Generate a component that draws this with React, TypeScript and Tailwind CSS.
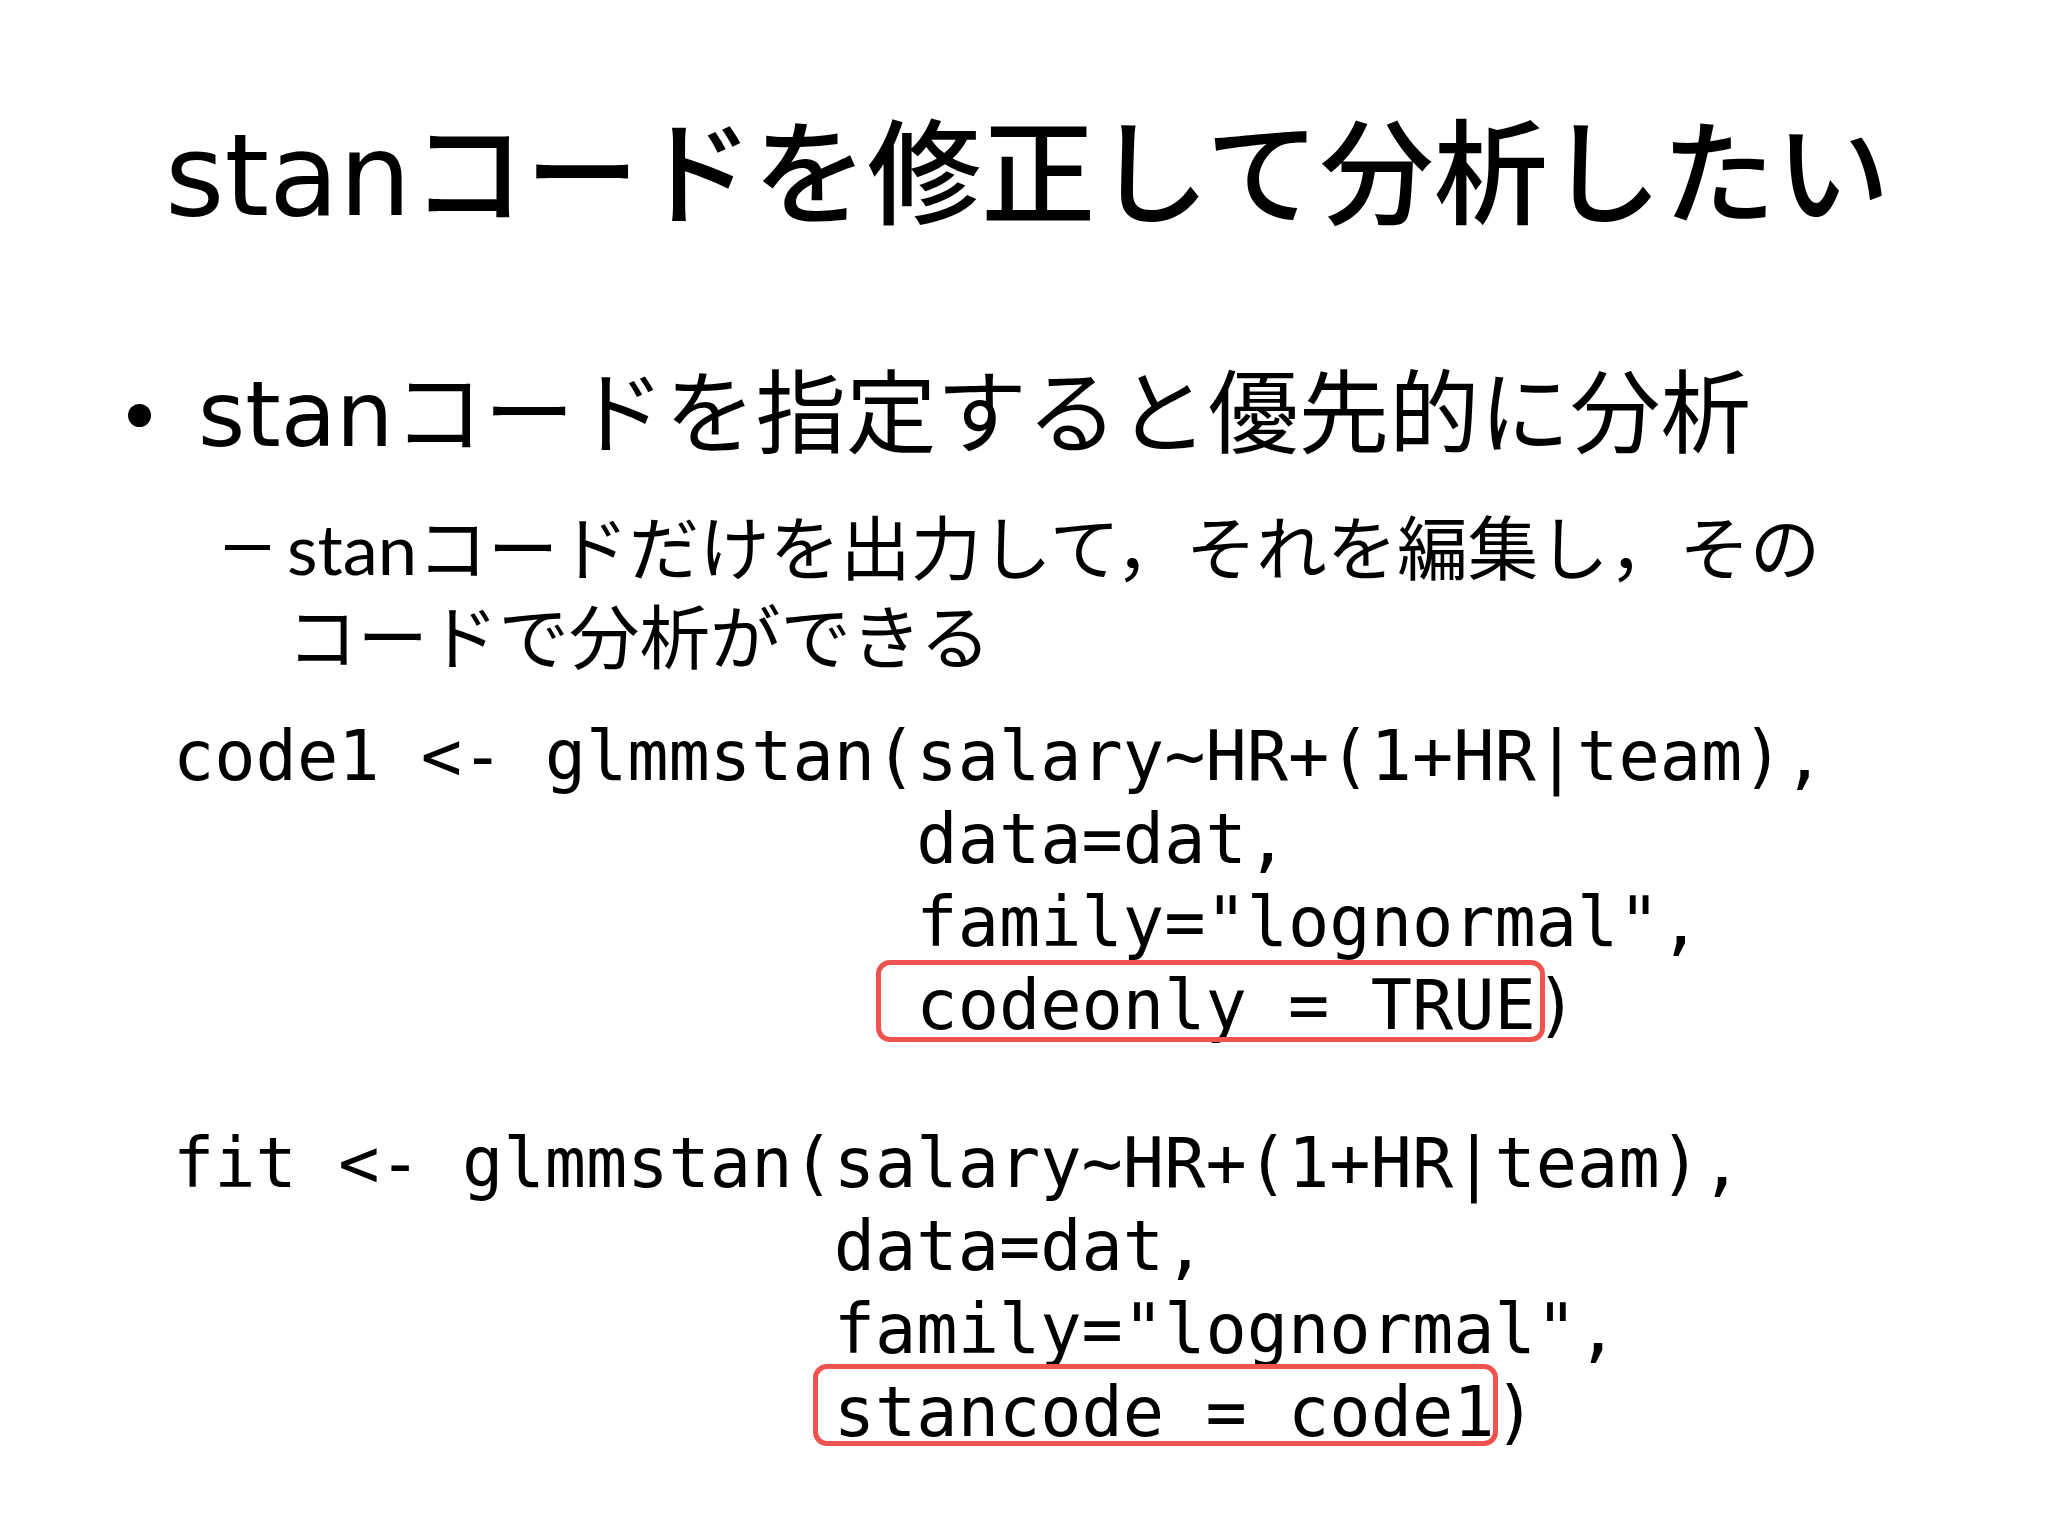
import type { ReactNode } from 'react'

const HEAD = '"DejaVu Sans", "Noto Sans CJK JP", sans-serif'
const SUB = 'Lato, "Noto Sans CJK JP", sans-serif'
const MONO = '"DejaVu Sans Mono", "Liberation Mono", monospace'

function Marked({ children, wide }: { children: ReactNode; wide?: boolean }) {
  return (
    <span className="relative">
      {children}
      <span
        className={
          wide
            ? 'absolute top-[-5px] bottom-[3px] left-[-40px] right-[-9px] rounded-[14px] border-[5px] border-[#ef5350]'
            : 'absolute top-[-8px] bottom-[6px] left-[-21px] right-[-3px] rounded-[14px] border-[5px] border-[#ef5350]'
        }
      />
    </span>
  )
}

function CodeLine({ children }: { children: ReactNode }) {
  return <div className="h-[83px] leading-[83px] whitespace-pre">{children}</div>
}

export default function App() {
  return (
    <div className="w-[2048px] h-[1536px] bg-white text-black overflow-hidden">
      <h1
        className="pt-[111px] pl-[165px] text-[114px] leading-[130px] font-medium"
        style={{ fontFamily: HEAD }}
      >
        stanコードを修正して分析したい
      </h1>

      <div
        className="mt-[119px] pl-[128px] flex items-center h-[110px]"
        style={{ fontFamily: HEAD }}
      >
        <span className="w-[23px] h-[23px] rounded-full bg-black shrink-0" />
        <span className="ml-[47px] text-[90.5px] leading-[110px]">
          stanコードを指定すると優先的に分析
        </span>
      </div>

      <div className="mt-[33px] pl-[225px] flex" style={{ fontFamily: SUB }}>
        <div className="w-[45px] h-[89px] flex items-center shrink-0">
          <span className="w-[45px] h-[5px] bg-black" />
        </div>
        <p className="ml-[17px] text-[70.5px] leading-[89px]">
          stanコードだけを出力して，それを編集し，その
          <br />
          コードで分析ができる
        </p>
      </div>

      <div className="mt-[34px] pl-[173px] text-[68.6px]" style={{ fontFamily: MONO }}>
        <CodeLine>code1 &lt;- glmmstan(salary~HR+(1+HR|team),</CodeLine>
        <CodeLine>{'                  '}data=dat,</CodeLine>
        <CodeLine>{'                  '}family="lognormal",</CodeLine>
        <CodeLine>
          {'                  '}
          <Marked wide>codeonly = TRUE</Marked>)
        </CodeLine>

        <div className="mt-[75px]">
          <CodeLine>fit &lt;- glmmstan(salary~HR+(1+HR|team),</CodeLine>
          <CodeLine>{'                '}data=dat,</CodeLine>
          <CodeLine>{'                '}family="lognormal",</CodeLine>
          <CodeLine>
            {'                '}
            <Marked>stancode = code1</Marked>)
          </CodeLine>
        </div>
      </div>
    </div>
  )
}
